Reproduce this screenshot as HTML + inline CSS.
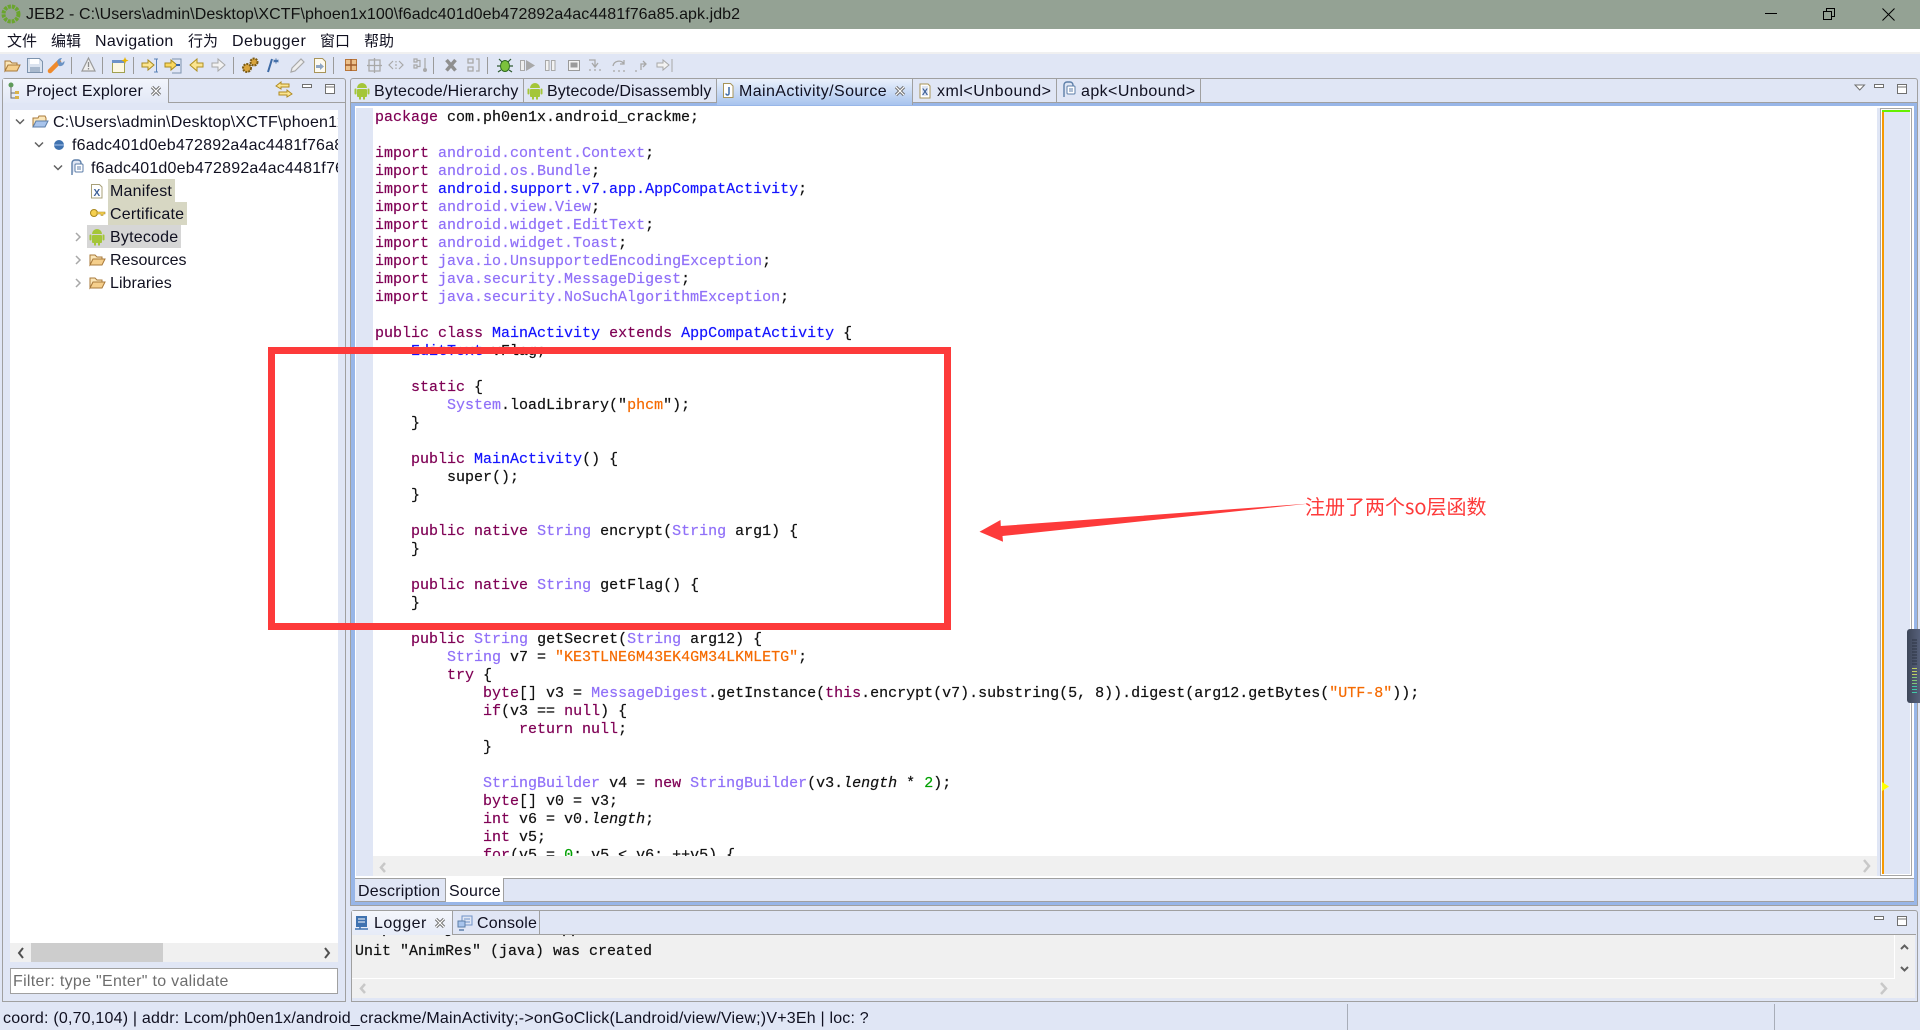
<!DOCTYPE html>
<html><head><meta charset="utf-8"><title>JEB2</title>
<style>
html,body{margin:0;padding:0;width:1920px;height:1030px;overflow:hidden;background:#e0e6f5}
.a{position:absolute}
.t{position:absolute;white-space:nowrap;font:16px/20px "Liberation Sans","Noto Sans CJK SC",sans-serif;color:#101020;letter-spacing:.2px;margin-top:1px}
.z{font-size:15px;letter-spacing:0}
pre{margin:0;font:15px/18px "Liberation Mono",monospace;color:#111;-webkit-text-stroke:.2px}
pre .k{color:#7f0055}pre .c{color:#1414ff}pre .i{color:#9070f8}pre .s{color:#f56a00}pre .n{color:#00a000}pre em{font-style:italic}
svg{position:absolute;left:0;top:0}
</style></head><body>
<!-- title bar -->
<div class="a" style="left:0;top:0;width:1920px;height:29px;background:#94a294"></div>
<div class="t" style="left:26px;top:4px;color:#111;letter-spacing:.07px">JEB2 - C:\Users\admin\Desktop\XCTF\phoen1x100\f6adc401d0eb472892a4ac4481f76a85.apk.jdb2</div>
<!-- menu -->
<div class="a" style="left:0;top:29px;width:1920px;height:23px;background:#fff"></div>
<div class="a" style="left:0;top:52px;width:1920px;height:2px;background:#f0f0f0"></div>
<div class="t z" style="left:7px;top:31px">文件</div>
<div class="t z" style="left:51px;top:31px">编辑</div>
<div class="t" style="left:95px;top:31px;letter-spacing:.3px">Navigation</div>
<div class="t z" style="left:188px;top:31px">行为</div>
<div class="t" style="left:232px;top:31px;letter-spacing:.5px">Debugger</div>
<div class="t z" style="left:320px;top:31px">窗口</div>
<div class="t z" style="left:364px;top:31px">帮助</div>

<!-- left panel -->
<div class="a" style="left:2px;top:78px;width:342px;height:922px;border:1px solid #a0a0a0;border-radius:3px 3px 0 0;background:#e0e6f5"></div>
<div class="a" style="left:3px;top:79px;width:165px;height:24px;border-right:1px solid #a0a0a0;background:linear-gradient(#f2f5fc,#e2e8f6)"></div>
<div class="a" style="left:168px;top:102px;width:177px;height:1px;background:#a0a0a0"></div>
<div class="a" style="left:10px;top:110px;width:328px;height:833px;background:#fff;overflow:hidden">
  <div class="a" style="left:98px;top:69px;width:67px;height:23px;background:#d7d7c3"></div>
  <div class="a" style="left:98px;top:92px;width:79px;height:23px;background:#d7d7c3"></div>
  <div class="a" style="left:77px;top:115px;width:94px;height:23px;background:#d6d6d6"></div>
  <div class="t" style="left:43px;top:2px">C:\Users\admin\Desktop\XCTF\phoen1x100</div>
  <div class="t" style="left:62px;top:25px">f6adc401d0eb472892a4ac4481f76a85.apk.jdb2</div>
  <div class="t" style="left:81px;top:48px">f6adc401d0eb472892a4ac4481f76a85.apk</div>
  <div class="t" style="left:100px;top:71px">Manifest</div>
  <div class="t" style="left:100px;top:94px">Certificate</div>
  <div class="t" style="left:100px;top:117px">Bytecode</div>
  <div class="t" style="left:100px;top:140px;letter-spacing:0">Resources</div>
  <div class="t" style="left:100px;top:163px;letter-spacing:.05px">Libraries</div>
</div>
<div class="t" style="left:26px;top:81px;z-index:2">Project Explorer</div>
<div class="a" style="left:10px;top:943px;width:328px;height:19px;background:#f0f0f0"></div>
<div class="a" style="left:31px;top:943px;width:132px;height:19px;background:#cdcdcd"></div>
<div class="a" style="left:10px;top:968px;width:326px;height:24px;background:#fff;border:1px solid #a0a0a0"></div>
<div class="t" style="left:13px;top:971px;color:#6d6d6d;letter-spacing:.3px">Filter: type "Enter" to validate</div>

<!-- editor panel -->
<div class="a" style="left:350px;top:78px;width:1566px;height:826px;border:1px solid #a0a0a0;border-radius:3px 3px 0 0;background:#e0e6f5"></div>
<div class="a" style="left:351px;top:102px;width:1566px;height:1px;background:#a0a0a0"></div>
<div class="a" style="left:351px;top:103px;width:1566px;height:3px;background:#98b6e8"></div>
<div class="a" style="left:351px;top:103px;width:4px;height:802px;background:#98b6e8"></div>
<div class="a" style="left:1914px;top:103px;width:3px;height:802px;background:#98b6e8"></div>
<div class="a" style="left:351px;top:902px;width:1566px;height:3px;background:#98b6e8"></div>
<div class="a" style="left:355px;top:106px;width:1559px;height:772px;background:#fff"></div>
<div class="a" style="left:355px;top:878px;width:1559px;height:1px;background:#a0a0a0"></div>
<div class="a" style="left:355px;top:901px;width:1559px;height:1px;background:#a0a0a0"></div>
<div class="a" style="left:356px;top:108px;width:17px;height:768px;background:#e0e6f5"></div>
<pre class="a" style="left:375px;top:109px;width:1500px;height:747px;overflow:hidden"><span class="k">package</span> com.ph0en1x.android_crackme;

<span class="k">import</span> <span class="i">android.content.Context</span>;
<span class="k">import</span> <span class="i">android.os.Bundle</span>;
<span class="k">import</span> <span class="c">android.support.v7.app.AppCompatActivity</span>;
<span class="k">import</span> <span class="i">android.view.View</span>;
<span class="k">import</span> <span class="i">android.widget.EditText</span>;
<span class="k">import</span> <span class="i">android.widget.Toast</span>;
<span class="k">import</span> <span class="i">java.io.UnsupportedEncodingException</span>;
<span class="k">import</span> <span class="i">java.security.MessageDigest</span>;
<span class="k">import</span> <span class="i">java.security.NoSuchAlgorithmException</span>;

<span class="k">public class</span> <span class="c">MainActivity</span> <span class="k">extends</span> <span class="c">AppCompatActivity</span> {
    <span class="c">EditText</span> vFlag;

    <span class="k">static</span> {
        <span class="i">System</span>.loadLibrary("<span class="s">phcm</span>");
    }

    <span class="k">public</span> <span class="c">MainActivity</span>() {
        super();
    }

    <span class="k">public native</span> <span class="i">String</span> encrypt(<span class="i">String</span> arg1) {
    }

    <span class="k">public native</span> <span class="i">String</span> getFlag() {
    }

    <span class="k">public</span> <span class="i">String</span> getSecret(<span class="i">String</span> arg12) {
        <span class="i">String</span> v7 = <span class="s">"KE3TLNE6M43EK4GM34LKMLETG"</span>;
        <span class="k">try</span> {
            <span class="k">byte</span>[] v3 = <span class="i">MessageDigest</span>.getInstance(<span class="k">this</span>.encrypt(v7).substring(5, 8)).digest(arg12.getBytes(<span class="s">"UTF-8"</span>));
            <span class="k">if</span>(v3 == <span class="k">null</span>) {
                <span class="k">return null</span>;
            }

            <span class="i">StringBuilder</span> v4 = <span class="k">new</span> <span class="i">StringBuilder</span>(v3.<em>length</em> * <span class="n">2</span>);
            <span class="k">byte</span>[] v0 = v3;
            <span class="k">int</span> v6 = v0.<em>length</em>;
            <span class="k">int</span> v5;
            <span class="k">for</span>(v5 = <span class="n">0</span>; v5 &lt; v6; ++v5) {
</pre>
<div class="a" style="left:373px;top:856px;width:1504px;height:20px;background:#f0f0f0"></div>
<div class="a" style="left:1877px;top:108px;width:3px;height:768px;background:#e0e6f5"></div>
<div class="a" style="left:1880px;top:108px;width:30px;height:766px;background:#e0e6f5;border:1px solid #a6a6a6;box-shadow:inset 0 0 0 1px #fff"></div>
<div class="a" style="left:1882px;top:110px;width:28px;height:2px;background:#66f000"></div>
<div class="a" style="left:1882px;top:112px;width:2px;height:762px;background:#f79a00"></div>
<!-- editor tabs -->
<div class="a" style="left:351px;top:79px;width:172px;height:23px;border-right:1px solid #a0a0a0"></div>
<div class="a" style="left:524px;top:79px;width:192px;height:23px;border-right:1px solid #a0a0a0"></div>
<div class="a" style="left:717px;top:79px;width:195px;height:26px;background:linear-gradient(#eaf1fc,#a8c4ee);border-right:1px solid #a0a0a0"></div>
<div class="a" style="left:913px;top:79px;width:143px;height:23px;border-right:1px solid #a0a0a0"></div>
<div class="a" style="left:1057px;top:79px;width:143px;height:23px;border-right:1px solid #a0a0a0"></div>
<div class="t" style="left:374px;top:81px;letter-spacing:.28px">Bytecode/Hierarchy</div>
<div class="t" style="left:547px;top:81px;letter-spacing:.13px">Bytecode/Disassembly</div>
<div class="t" style="left:739px;top:81px;letter-spacing:.4px">MainActivity/Source</div>
<div class="t" style="left:937px;top:81px;letter-spacing:.5px">xml&lt;Unbound&gt;</div>
<div class="t" style="left:1081px;top:81px;letter-spacing:.42px">apk&lt;Unbound&gt;</div>
<!-- bottom editor tabs -->
<div class="a" style="left:355px;top:879px;width:90px;height:22px;background:#e0e6f5;border-right:1px solid #a0a0a0"></div>
<div class="a" style="left:446px;top:878px;width:57px;height:24px;background:#fff;border-right:1px solid #a0a0a0"></div>
<div class="t" style="left:358px;top:881px">Description</div>
<div class="t" style="left:449px;top:881px">Source</div>

<!-- logger panel -->
<div class="a" style="left:351px;top:910px;width:1565px;height:90px;border:1px solid #a0a0a0;border-radius:3px 3px 0 0;background:#e0e6f5"></div>
<div class="a" style="left:352px;top:934px;width:1564px;height:1px;background:#a0a0a0"></div>
<div class="a" style="left:352px;top:935px;width:1563px;height:63px;background:#f0f0f0"></div>
<div class="a" style="left:352px;top:911px;width:100px;height:24px;background:linear-gradient(#f4f6fc,#e6ebf7);border-right:1px solid #a0a0a0"></div>
<div class="a" style="left:453px;top:911px;width:86px;height:23px;border-right:1px solid #a0a0a0"></div>
<div class="a" style="left:352px;top:978px;width:1543px;height:1px;background:#fff"></div>
<div class="a" style="left:1894px;top:935px;width:1px;height:44px;background:#fff"></div>
<pre class="a" style="left:355px;top:935px;width:1530px;height:43px;overflow:hidden"><span style="position:absolute;left:0;top:-14px;white-space:pre">   p      j            pp             .</span><span style="position:absolute;left:0;top:8px;white-space:pre">Unit "AnimRes" (java) was created</span></pre>
<div class="t" style="left:374px;top:913px;letter-spacing:.5px">Logger</div>
<div class="t" style="left:477px;top:913px">Console</div>

<!-- status -->
<div class="t" style="left:3px;top:1008px">coord: (0,70,104) | addr: Lcom/ph0en1x/android_crackme/MainActivity;-&gt;onGoClick(Landroid/view/View;)V+3Eh | loc: ?</div>
<div class="a" style="left:1347px;top:1004px;width:1px;height:26px;background:#a8adb8"></div>
<div class="a" style="left:1774px;top:1004px;width:1px;height:26px;background:#a8adb8"></div>

<!-- icons -->
<svg width="1920" height="1030" viewBox="0 0 1920 1030" fill="none">
<defs>
<g id="droid"><path d="M-5-2a5 5 0 0 1 10 0z" fill="#a4c639"/><rect x="-5" y="-1" width="10" height="8" rx="1" fill="#a4c639"/><rect x="-7.5" y="-1.5" width="2" height="6" rx="1" fill="#a4c639"/><rect x="5.5" y="-1.5" width="2" height="6" rx="1" fill="#a4c639"/><rect x="-3" y="6" width="2" height="3.5" fill="#a4c639"/><rect x="1" y="6" width="2" height="3.5" fill="#a4c639"/></g>
<g id="fold"><path d="M-7 5V-5h5l2 2h5v2h-8l-4 6z" fill="#fbe6b8" stroke="#a8793a"/><path d="M-7 5l3-6H8L5 5z" fill="#f5cf8c" stroke="#a8793a"/></g>
<g id="cls"><path d="M-5-7H3L5-5V7H-5z" fill="#fff" stroke="#a89458"/><path d="M-3-5H3V5H-3z" fill="#dfe6f4"/></g>
<g id="x"><path d="M-4-4L4 4M4-4L-4 4" stroke="#707070" stroke-width="3.2"/><path d="M-4-4L4 4M4-4L-4 4" stroke="#fff" stroke-width="1.2"/></g>
<g id="apk"><path d="M-5 7V-5a3 3 0 0 1 3-3h3a3 3 0 0 1 3 3v7H-2" fill="#dfe6f4" stroke="#5c7ea8" stroke-width="1.4"/><rect x="-2" y="-4" width="8" height="8" rx="1" fill="#fff" stroke="#5c7ea8"/><path d="M0-1h4M0 1h4" stroke="#5c7ea8"/></g>
<g id="min"><rect x=".5" y=".5" width="9" height="3" fill="#fff" stroke="#707070"/></g>
<g id="max"><rect x=".5" y=".5" width="9" height="9" fill="#fff" stroke="#707070"/><path d="M1 3h8" stroke="#707070"/></g>
<g id="chv"><path d="M-2-4L2 0L-2 4" stroke="#a8a8a8" stroke-width="1.5"/></g>
<g id="chd"><path d="M-4-1.5L0 2.5L4-1.5" stroke="#606060" stroke-width="1.5"/></g>
<g id="grid"><path d="M-5-5H6V6H-5zM.5-7V8M-7 .5H8" stroke="#a8a8a8" stroke-width="1.3"/></g>
<linearGradient id="gad" x1="0" x2="1" y1="0" y2="0"><stop offset="0" stop-color="#3d4658"/><stop offset="1" stop-color="#56607a"/></linearGradient>
</defs>

<!-- window icon -->
<circle cx="11" cy="14" r="7.5" stroke="#6aa52e" stroke-width="4" stroke-dasharray="3 1"/>
<!-- window buttons -->
<path d="M1765 13.5h12" stroke="#000"/>
<path d="M1823.5 11.5h8v8h-8zM1826.5 11V8.5h8v8H1832" stroke="#000"/>
<path d="M1882.5 8.5l12 12M1894.5 8.5l-12 12" stroke="#000"/>

<!-- toolbar -->
<g id="tb">
<use href="#fold" transform="translate(12,66)"/>
<path d="M27.5 58.5h12l3 3v11h-15z" fill="#dbe3ef" stroke="#7d93ad"/><rect x="30" y="59" width="9" height="5" fill="#fff"/><rect x="30" y="67" width="10" height="5" fill="#a9b9cd"/>
<path d="M50 71l9-9" stroke="#ef8a2c" stroke-width="4.5" stroke-linecap="round"/><path d="M57 62a4.500 4.500 0 0 1 5-4l-2 3 2 2 2.500-2a4.500 4.500 0 0 1-5.500 5z" fill="#6b93c4"/>
<path d="M71.500 57v17" stroke="#9a9a9a"/>
<path d="M88.500 58l6.500 13H82z" fill="#eee" stroke="#9a9a9a" stroke-width="1.200"/><path d="M88.500 62v5M88.500 68v1.500" stroke="#8a8a8a" stroke-width="1.300"/>
<path d="M102.500 57v17" stroke="#9a9a9a"/>
<path d="M112.500 61.500h12v11h-12z" fill="#fdf8e2" stroke="#a0a050"/><path d="M112 60h13v3h-13z" fill="#6f93c8"/><path d="M125 57l1 2.500 2.500 1-2.500 1-1 2.500-1-2.500-2.500-1 2.500-1z" fill="#e8b400"/>
<path d="M133.500 57v17" stroke="#9a9a9a"/>
<path d="M142 63h6v-3l6 5-6 5v-3h-6z" fill="#fbe590" stroke="#a88a20"/><path d="M154 59h2.500v13H154M158 59h-1.500M158 72h-1.500" stroke="#5a82b8"/>
<path d="M165 63h6v-3l6 5-6 5v-3h-6z" fill="#fbd860" stroke="#a88a20"/><path d="M172 59h9v14h-9" stroke="#7d93ad"/><path d="M176 64h4v2h-4z" fill="#3a66a8"/>
<path d="M203 63h-6v-4l-7 6 7 6v-4h6z" fill="#fbe590" stroke="#b09020"/>
<path d="M212 63h6v-4l7 6-7 6v-4h-6z" fill="#f2f2f2" stroke="#a8a8a8"/>
<path d="M233.500 57v17" stroke="#9a9a9a"/>
<circle cx="247" cy="68" r="4" fill="#d9a43c" stroke="#7a5a14" stroke-width="2" stroke-dasharray="2 1"/><circle cx="254" cy="62" r="3.500" fill="#d9a43c" stroke="#7a5a14" stroke-width="2" stroke-dasharray="2 1"/>
<path d="M268 72l4-13" stroke="#3d6aa5" stroke-width="2"/><path d="M276 58.500v5M273.500 60l5 2M278.500 60l-5 2" stroke="#3d6aa5"/>
<path d="M291 72l1-4 9-9 3 3-9 9z" fill="#eee" stroke="#a8a8a8" stroke-width="1.200"/>
<path d="M314.500 58.500h8l3 3v11h-11z" fill="#fdfaf0" stroke="#a89458"/><path d="M316 65h4v-2l4 3.500-4 3.500v-2h-4z" fill="#8fa6c4"/>
<path d="M333.500 57v17" stroke="#9a9a9a"/>
<path d="M345.500 59.500h11v11h-11z" fill="#ecc08a" stroke="#b9773a"/><path d="M351 59v12M345 65h12" stroke="#a05a2a" stroke-width="1.400"/>
<use href="#grid" transform="translate(374,65)"/>
<path d="M393 61l-4 4 4 4M399 61l4 4-4 4M396 61v1.500M396 64v2M396 67.500V69" stroke="#a8a8a8" stroke-width="1.200"/>
<path d="M414 59h3v3h-3zM414 65h3v3h-3zM417 60.500h3v6h-3M425 58v12" stroke="#a8a8a8" stroke-width="1.200"/><circle cx="425" cy="70" r="2" fill="#a8a8a8"/>
<path d="M433.500 57v17" stroke="#9a9a9a"/>
<path d="M446.500 60l9 10.500M455.500 60l-9 10.500" stroke="#8f8f8f" stroke-width="3.500"/>
<path d="M468 59h5v4h-5zM468 67h5v4h-5zM476 59h3v12h-3" stroke="#a8a8a8" stroke-width="1.300"/>
<path d="M487.500 57v17" stroke="#9a9a9a"/>
<ellipse cx="505" cy="66" rx="4.500" ry="5.500" fill="#7cc23c" stroke="#2f6a20"/><path d="M499 59l3 3M511 59l-3 3M497 66h3M510 66h3M498 72l3-2M512 72l-3-2" stroke="#2f5a30" stroke-width="1.200"/>
<rect x="520.500" y="60.500" width="4" height="10" fill="#eee" stroke="#a8a8a8"/><path d="M526 60v11l9-5.500z" fill="#a8a8a8"/>
<rect x="545.500" y="60.500" width="3.500" height="10" fill="#f2f2f2" stroke="#a8a8a8"/><rect x="551.500" y="60.500" width="3.500" height="10" fill="#f2f2f2" stroke="#a8a8a8"/>
<rect x="568.500" y="60.500" width="11" height="10" fill="#f2f2f2" stroke="#9a9a9a"/><rect x="570.500" y="62.500" width="7" height="5" fill="#9a9a9a"/>
<path d="M589 60h6v6M592 63l3 4 3-4M589 70h2M594 70h2M599 70h2" stroke="#a8a8a8" stroke-width="1.300"/>
<path d="M613 66a6 6 0 0 1 11-2M624 60v4h-4M613 71h2M618 71h2M623 71h2" stroke="#a8a8a8" stroke-width="1.300"/>
<path d="M641 70v-6h5M643 61l3 3-3 3M635 71h2" stroke="#a8a8a8" stroke-width="1.300"/>
<path d="M657 63h6v-3l6 5-6 5v-3h-6z" fill="#f2f2f2" stroke="#a8a8a8"/><path d="M672 59v13" stroke="#a8a8a8"/>
</g>

<!-- project explorer head -->
<circle cx="11" cy="85" r="2.500" fill="#5e9a5a"/><path d="M11 87v11h4M11 93h4" stroke="#6a6a6a"/><rect x="15" y="91" width="4" height="3" fill="#d9b24a"/><rect x="15" y="96" width="4" height="3" fill="#d9b24a"/>
<use href="#x" transform="translate(156,91)"/>
<path d="M276 86l5-4v2h8v3h-8v2zM292 94l-5-4v2h-8v3h8v2z" fill="#fbe590" stroke="#b08a20"/>
<use href="#min" transform="translate(302,84)"/><use href="#max" transform="translate(325,84)"/>

<!-- tree -->
<use href="#chd" transform="translate(20,121)"/><use href="#chd" transform="translate(39,144)"/><use href="#chd" transform="translate(58,167)"/>
<use href="#chv" transform="translate(78,237)"/><use href="#chv" transform="translate(78,260)"/><use href="#chv" transform="translate(78,283)"/>
<path d="M33 127V118h5l1-2h6l1 2v4" fill="#fbe6b8" stroke="#a8793a"/><path d="M33 127l3-6h12l-3 6z" fill="#a8c4ec" stroke="#5c7ea8"/>
<circle cx="59" cy="145" r="5" fill="#3f72b0"/><path d="M54 145h10" stroke="#a8c4ec"/>
<use href="#apk" transform="translate(77,168)"/>
<path d="M91.500 184.500h8l2.500 2.500v11H91.500z" fill="#fff" stroke="#a8a078"/><text x="93.500" y="196" font-family="Liberation Sans,sans-serif" font-size="10" font-weight="bold" fill="#3d5f96">X</text>
<circle cx="94" cy="213" r="3.500" fill="#f5d050" stroke="#a8861c"/><path d="M97 212h8v2h-2v1.500h-2V214h-4z" fill="#f5d050" stroke="#a8861c" stroke-width=".6"/>
<use href="#droid" transform="translate(97,236)"/>
<use href="#fold" transform="translate(97,260)"/><use href="#fold" transform="translate(97,283)"/>

<!-- tree scrollbar -->
<path d="M23 948l-4 5 4 5M325 948l4 5-4 5" stroke="#505050" stroke-width="2"/>

<!-- editor tab icons -->
<use href="#droid" transform="translate(362,90)"/><use href="#droid" transform="translate(535,90)"/>
<path d="M723.500 83.500h7l2.500 2.500v11.500h-9.500z" fill="#fff" stroke="#a89458"/><path d="M729 87v6.500a1.500 1.500 0 0 1-3 0" stroke="#3d6aa5" stroke-width="1.500"/>
<use href="#x" transform="translate(900,91)"/>
<use href="#cls" transform="translate(925,91)"/><text x="922" y="95" font-family="Liberation Sans,sans-serif" font-size="9" font-weight="bold" fill="#3d5f96">X</text>
<use href="#apk" transform="translate(1069,90)"/>
<path d="M1855 85h9.500l-4.750 5z" fill="#fff" stroke="#707070" stroke-width="1"/>
<use href="#min" transform="translate(1874,84)"/><use href="#max" transform="translate(1897,84)"/>

<!-- editor scroll arrows -->
<path d="M385 863l-4 4.500 4 4.500M1864 860l5 6-5 6" stroke="#c8c8c8" stroke-width="2.500"/>

<!-- overview marker -->
<path d="M1882 782v9l7-4.500z" fill="#ffff00"/>

<!-- logger -->
<rect x="356" y="916" width="11" height="11" fill="#3f72b0"/><path d="M358 919h7M358 922h7" stroke="#fff"/><path d="M355 929h13M360 927v2" stroke="#3f72b0" stroke-width="1.500"/>
<rect x="462" y="916" width="10" height="9" fill="#dfe6f4" stroke="#6f93c8"/><path d="M464 919h6M464 922h6" stroke="#6f93c8"/><rect x="458" y="921" width="7" height="6" fill="#a8c4ec" stroke="#5c7ea8"/><path d="M459 930h5" stroke="#5c7ea8" stroke-width="1.500"/>
<use href="#x" transform="translate(440,923)"/>
<use href="#min" transform="translate(1874,916)"/><use href="#max" transform="translate(1897,916)"/>
<path d="M1901 949l3.500-3.500 3.500 3.500M1901 967l3.500 3.500 3.500-3.500" stroke="#606060" stroke-width="2"/>
<path d="M1881 983l5 5.500-5 5.500M365 984l-4 4.500 4 4.500" stroke="#c8c8c8" stroke-width="2.500"/>

<!-- side gadget -->
<path d="M1920 629h-10a3 3 0 0 0-3 3v68a3 3 0 0 0 3 3h10z" fill="url(#gad)"/>
<path d="M1912 640h5M1912 643h5M1912 646h5M1912 649h5M1912 652h5M1912 655h5M1912 658h5M1912 661h5M1912 664h5" stroke="#2d3444"/>
<path d="M1912 668.500h5M1912 671.500h5M1912 674.500h5" stroke="#c0d060"/><path d="M1912 677.500h5M1912 680.500h5M1912 683.500h5" stroke="#80c878"/><path d="M1912 686.500h5M1912 689.500h5M1912 692.500h5" stroke="#40c8a8"/>

<!-- annotation -->
<rect x="271.500" y="350.500" width="676" height="276" stroke="#fd3a3a" stroke-width="7"/>
<path d="M1310 503.500L1000.800 526 1000.500 520 979.500 531.700 1003 541.700 1002.500 536z" fill="#fd3a3a"/>
</svg>
<div class="t" style="left:1305px;top:490px;font-size:20px;line-height:30px;letter-spacing:0;color:#fd3a3a;font-family:'Noto Sans CJK SC','Liberation Sans',sans-serif">注册了两个so层函数</div>
</body></html>
